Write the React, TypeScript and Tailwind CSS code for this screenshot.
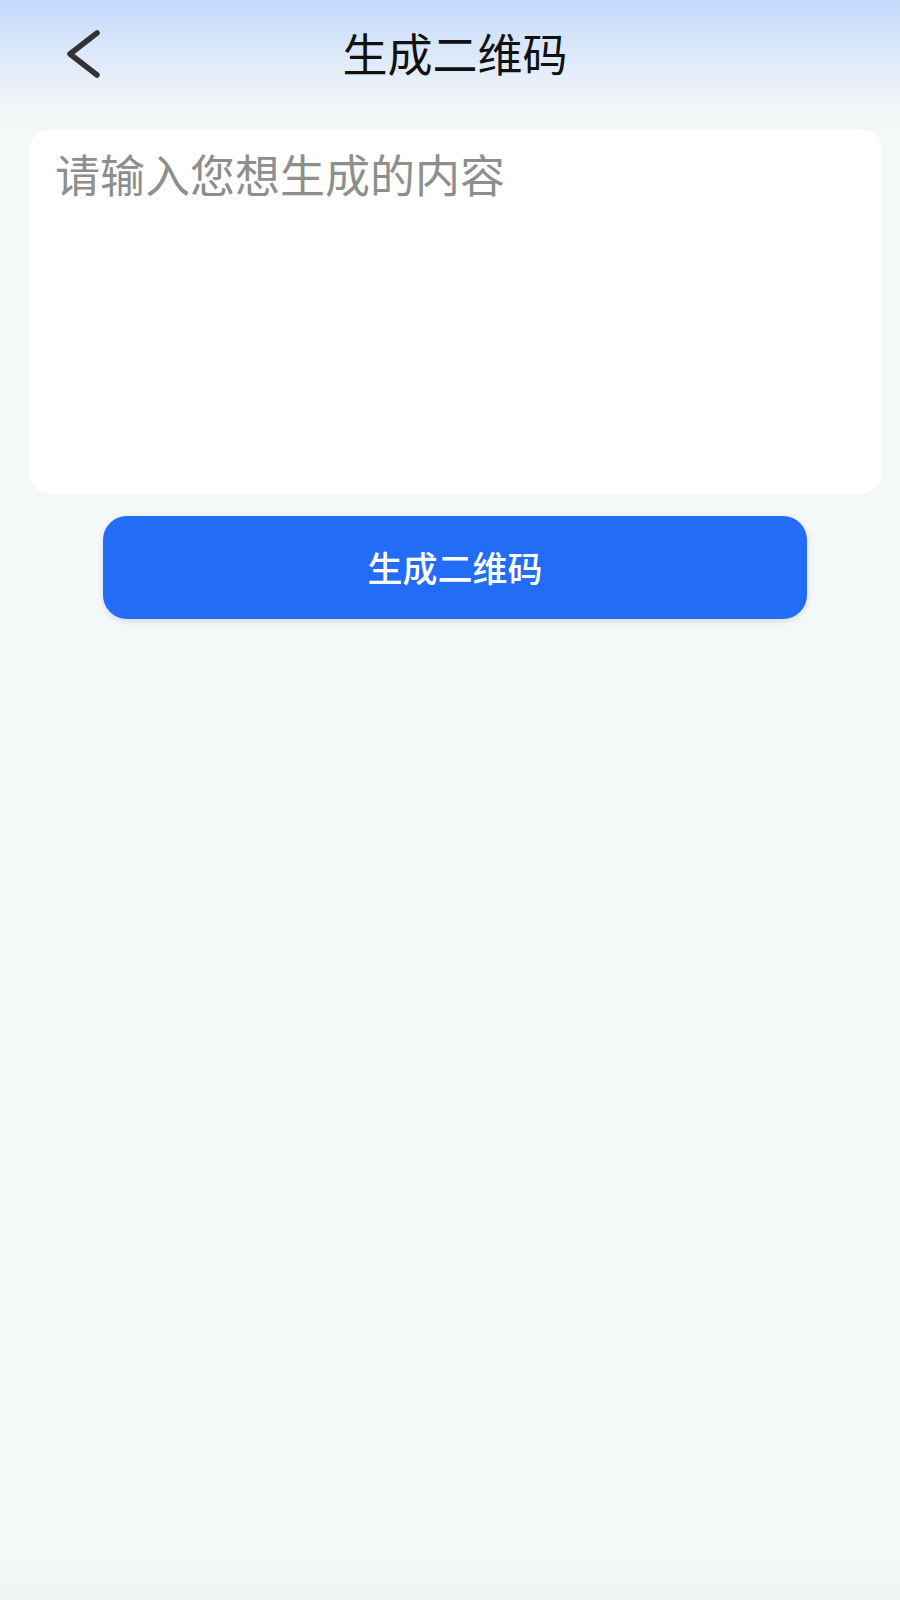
import { useState } from 'react'

export default function App() {
  const [text, setText] = useState('')

  return (
    <div
      className="min-h-[1600px] w-[900px] flex flex-col bg-[linear-gradient(to_bottom,#c1dafc_0px,#dde9fa_55px,#f3f7f8_112px,#f5f8f8_140px,#f5f8f8_1560px,#eef2f2_1600px)]"
      style={{ fontFamily: '"Noto Sans CJK SC", "Noto Sans", sans-serif' }}
    >
      <header className="h-[111px] flex items-start pt-[24px] pl-[60px]">
        <button className="w-[44px] h-[56px] shrink-0">
          <svg width="44" height="56" viewBox="0 0 44 56" fill="none">
            <path d="M37 9 L10 30 L37 51" stroke="#333333" strokeWidth="5.5" strokeLinecap="round" strokeLinejoin="round" />
          </svg>
        </button>
        <h1 className="flex-1 text-center text-[45px] leading-[60px] text-[#111] pr-[94px] -mt-[1px]">生成二维码</h1>
      </header>

      <div className="ml-[29px] mr-[18px] mt-[18px] h-[365px] bg-white rounded-[22px] px-[26px] pt-[15px]">
        <textarea
          value={text}
          onChange={(e) => setText(e.target.value)}
          placeholder="请输入您想生成的内容"
          className="w-full h-full resize-none outline-none bg-transparent text-[45px] leading-[60px] text-[#333] placeholder:text-[#8e8e8e]"
        />
      </div>

      <button className="ml-[103px] mr-[93px] mt-[22px] h-[103px] rounded-[24px] bg-[#236cf6] text-white text-[35px] font-medium shadow-[0_2px_6px_rgba(0,0,0,0.12)] flex items-center justify-center">
        生成二维码
      </button>
    </div>
  )
}
